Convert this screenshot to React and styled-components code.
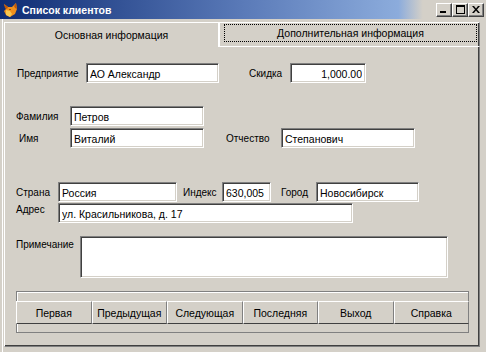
import React from "react";
import styled, { createGlobalStyle } from "styled-components";

const GlobalStyle = createGlobalStyle`
  html, body {
    margin: 0;
    padding: 0;
    background: #d4d0c8;
  }
  body {
    font-family: "Liberation Sans", Arial, sans-serif;
    font-size: 10px;
    color: #000;
  }
`;

const Window = styled.div`
  width: 486px;
  height: 352px;
  background: #d4d0c8;
  display: flex;
  flex-direction: column;
  overflow: hidden;
`;

const TitleBar = styled.div`
  height: 19px;
  flex: none;
  display: flex;
  align-items: center;
  padding: 0 2px 0 3px;
  background: linear-gradient(90deg, #0e2c74 0%, #5a7ab8 50%, #8cacdc 82%, #d4d0c8 87%);
`;

const Caption = styled.span`
  margin-left: 3px;
  color: #fff;
  font-weight: bold;
  font-size: 10.5px;
`;

const CaptionButtons = styled.div`
  margin-left: auto;
  display: flex;
`;

const CapBtn = styled.div`
  width: 16px;
  height: 14px;
  box-sizing: border-box;
  background: #d4d0c8;
  border: 1px solid;
  border-color: #fff #404040 #404040 #fff;
  box-shadow: inset -1px -1px 0 #808080;
  display: flex;
  align-items: center;
  justify-content: center;
`;

const Body = styled.div`
  flex: 1;
  margin-left: 2px;
  border-left: 1px solid #fff;
  padding: 3px 6px 5px 1px;
  display: flex;
  flex-direction: column;
`;

const TabStrip = styled.div`
  display: flex;
  height: 24px;
  flex: none;
`;

const Tab = styled.div`
  width: ${(p) => p.$w}px;
  height: ${(p) => (p.$active ? 25 : 24)}px;
  box-sizing: border-box;
  position: relative;
  z-index: ${(p) => (p.$active ? 1 : 0)};
  background: #d4d0c8;
  border-top: 1px solid #fff;
  border-left: 1px solid #fff;
  border-right: 1px solid ${(p) => (p.$active ? "#fff" : "#808080")};
  box-shadow: ${(p) => (p.$active ? "none" : "inset -1px 0 0 #404040")};
  padding: ${(p) => (p.$active ? "0" : "1px 2px 4px 4px")};
  display: flex;
  align-items: center;
  justify-content: center;
  flex: none;
  font-size: 10.5px;
`;

const FocusRing = styled.div`
  flex: 1;
  align-self: stretch;
  border: 1px dotted #000;
  display: flex;
  align-items: center;
  justify-content: center;
`;

const Panel = styled.div`
  flex: 1;
  box-sizing: border-box;
  border-top: 1px solid #fff;
  border-left: 1px solid #fff;
  border-right: 1px solid #808080;
  border-bottom: 1px solid #808080;
  box-shadow: inset -1px -1px 0 #404040;
  padding: 16px 0 0 11px;
  display: flex;
  flex-direction: column;
`;

const Row = styled.div`
  display: flex;
  align-items: ${(p) => (p.$top ? "flex-start" : "center")};
  margin-top: ${(p) => p.$mt || 0}px;
`;

const Label = styled.span`
  flex: none;
  box-sizing: border-box;
  width: ${(p) => p.$w}px;
  margin-left: ${(p) => p.$ml || 0}px;
  padding-left: ${(p) => p.$indent || 0}px;
  padding-top: ${(p) => p.$pt || 0}px;
  line-height: 13px;
  white-space: nowrap;
`;

const sunken = `
  box-sizing: border-box;
  background: #fff;
  border: 1px solid;
  border-color: #808080 #fff #fff #808080;
  box-shadow: inset 1px 1px 0 #404040, inset -1px -1px 0 #d4d0c8;
  font-family: "Liberation Sans", Arial, sans-serif;
  font-size: 10.5px;
  color: #000;
  outline: none;
  margin: 0;
`;

const Input = styled.input`
  ${sunken}
  flex: none;
  width: ${(p) => p.$w}px;
  height: 20px;
  padding: 1px 3px 0 3px;
  text-align: ${(p) => (p.$right ? "right" : "left")};
`;

const Memo = styled.textarea`
  ${sunken}
  flex: none;
  width: ${(p) => p.$w}px;
  height: 42px;
  resize: none;
  padding: 3px 4px;
`;

const NavFrame = styled.div`
  margin-top: 13px;
  width: 453px;
  height: 42px;
  box-sizing: border-box;
  border: 1px solid #808080;
  box-shadow: inset 1px 1px 0 #fff;
  padding-top: 9px;
`;

const NavRow = styled.div`
  display: flex;
  margin: 0 -1px;
`;

const NavButton = styled.button`
  flex: 1;
  height: 23px;
  box-sizing: border-box;
  margin: 0;
  padding: 0;
  background: #d4d0c8;
  border: 1px solid;
  border-color: #fff #808080 #404040 #fff;
  font-family: "Liberation Sans", Arial, sans-serif;
  font-size: 10.5px;
  color: #000;
`;

const AppIcon = () => (
  <svg width="16" height="16" viewBox="0 0 16 16">
    <polygon points="1,2 5,5 9,5 13,1 14,7 12,12 7,15 3,13 1,9 3,7" fill="#f0901c" />
    <polygon points="1,2 5,5 4,7 2,6" fill="#c05808" />
    <polygon points="13,1 14,7 12,6 11,4" fill="#c05808" />
    <polygon points="3,8 7,9 9,12 7,15 3,13" fill="#f8c850" />
    <polygon points="6,7 8,7 7,8" fill="#402000" />
  </svg>
);

const navItems = ["Первая", "Предыдущая", "Следующая", "Последняя", "Выход", "Справка"];

export default function App() {
  return (
    <>
      <GlobalStyle />
      <Window>
        <TitleBar>
          <AppIcon />
          <Caption>Список клиентов</Caption>
          <CaptionButtons>
            <CapBtn>
              <svg width="8" height="7" viewBox="0 0 8 7">
                <rect x="0" y="5" width="6" height="2" fill="#000" />
              </svg>
            </CapBtn>
            <CapBtn>
              <svg width="9" height="9" viewBox="0 0 9 9">
                <rect x="0.5" y="0.5" width="8" height="8" fill="none" stroke="#000" />
                <rect x="0" y="0" width="9" height="2" fill="#000" />
              </svg>
            </CapBtn>
            <CapBtn>
              <svg width="8" height="7" viewBox="0 0 8 7">
                <path d="M0 0H2L4 2.5L6 0H8L5 3.5L8 7H6L4 4.5L2 7H0L3 3.5Z" fill="#000" />
              </svg>
            </CapBtn>
          </CaptionButtons>
        </TitleBar>

        <Body>
          <TabStrip>
            <Tab $w={215} $active>
              Основная информация
            </Tab>
            <Tab $w={261}>
              <FocusRing>Дополнительная информация</FocusRing>
            </Tab>
          </TabStrip>

          <Panel>
            <Row>
              <Label $w={70} $indent={1}>Предприятие</Label>
              <Input $w={133} value="АО Александр" readOnly />
              <Label $w={41} $ml={30}>Скидка</Label>
              <Input $w={76} $right value="1,000.00" readOnly />
            </Row>

            <Row $mt={23}>
              <Label $w={54}>Фамилия</Label>
              <Input $w={134} value="Петров" readOnly />
            </Row>

            <Row $mt={2}>
              <Label $w={54} $indent={3}>Имя</Label>
              <Input $w={134} value="Виталий" readOnly />
              <Label $w={55} $ml={22}>Отчество</Label>
              <Input $w={134} value="Степанович" readOnly />
            </Row>

            <Row $mt={34}>
              <Label $w={42}>Страна</Label>
              <Input $w={119} value="Россия" readOnly />
              <Label $w={39} $ml={6}>Индекс</Label>
              <Input $w={49} value="630,005" readOnly />
              <Label $w={35} $ml={10}>Город</Label>
              <Input $w={103} value="Новосибирск" readOnly />
            </Row>

            <Row $mt={1} $top>
              <Label $w={42}>Адрес</Label>
              <Input $w={295} value="ул. Красильникова, д. 17" readOnly />
            </Row>

            <Row $mt={13} $top>
              <Label $w={64} $pt={2}>Примечание</Label>
              <Memo $w={368} value="" readOnly />
            </Row>

            <NavFrame>
              <NavRow>
                {navItems.map((item) => (
                  <NavButton key={item}>{item}</NavButton>
                ))}
              </NavRow>
            </NavFrame>
          </Panel>
        </Body>
      </Window>
    </>
  );
}
